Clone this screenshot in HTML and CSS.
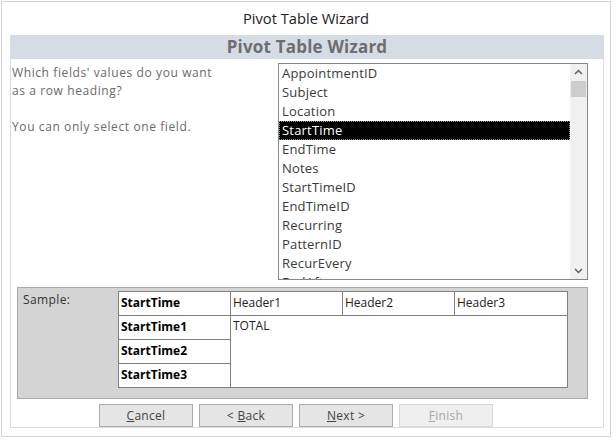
FILE: index.html
```html
<!DOCTYPE html>
<html lang="en">
<head>
  <meta charset="UTF-8" />
  <title>Pivot Table Wizard</title>
  <link rel="stylesheet" href="styles.css">
</head>
<body>
  <div class="window">
    <div class="titlebar">Pivot Table Wizard</div>

    <div class="panel">
      <div class="band">Pivot Table Wizard</div>

      <div class="step">
        <div class="prompt">
          <p>Which fields' values do you want<br>as a row heading?</p>
          <p>You can only select one field.</p>
        </div>

        <div class="listbox">
          <ul class="items">
            <li>AppointmentID</li>
            <li>Subject</li>
            <li>Location</li>
            <li class="selected">StartTime</li>
            <li>EndTime</li>
            <li>Notes</li>
            <li>StartTimeID</li>
            <li>EndTimeID</li>
            <li>Recurring</li>
            <li>PatternID</li>
            <li>RecurEvery</li>
            <li>EndAfter</li>
            <li>EndBy</li>
          </ul>
          <div class="scrollbar">
            <svg class="arrow" width="17" height="17" viewBox="0 0 17 17">
              <path d="M5 10 L8.5 6.5 L12 10" fill="none" stroke="#606060" stroke-width="1.5"/>
            </svg>
            <div class="thumb"></div>
            <div class="track"></div>
            <svg class="arrow" width="17" height="17" viewBox="0 0 17 17">
              <path d="M5 7 L8.5 10.5 L12 7" fill="none" stroke="#606060" stroke-width="1.5"/>
            </svg>
          </div>
        </div>
      </div>

      <div class="sample">
        <span class="sample-label">Sample:</span>
        <div class="grid">
          <div class="cell head">StartTime</div>
          <div class="cell">Header1</div>
          <div class="cell">Header2</div>
          <div class="cell">Header3</div>
          <div class="cell head">StartTime1</div>
          <div class="cell total">TOTAL</div>
          <div class="cell head">StartTime2</div>
          <div class="cell head">StartTime3</div>
        </div>
      </div>

      <div class="buttons">
        <button><u>C</u>ancel</button>
        <button>&lt; <u>B</u>ack</button>
        <button><u>N</u>ext &gt;</button>
        <button class="disabled"><u>F</u>inish</button>
      </div>
    </div>
  </div>
</body>
</html>
```

FILE: styles.css
```css
* {
  box-sizing: border-box;
}

html, body {
  margin: 0;
  padding: 0;
  background: #fff;
  font-family: 'Open Sans', 'DejaVu Sans', sans-serif;
  font-size: 12px;
  color: #333;
}

.window {
  margin: 1px 0 0 1px;
  width: 610px;
  height: 436px;
  border: 1px solid #d4d4d4;
  display: flex;
  flex-direction: column;
}

.titlebar {
  height: 33px;
  line-height: 33px;
  text-align: center;
  font-size: 14.7px;
  color: #222;
}

.panel {
  margin: 0 6px 0 8px;
  height: 393px;
  border: 1px solid #dcdcdc;
  border-top: none;
  display: flex;
  flex-direction: column;
}

.band {
  height: 24px;
  line-height: 24px;
  background: #d6dce5;
  text-align: center;
  font-size: 17px;
  font-weight: 700;
  letter-spacing: 0.2px;
  color: #6e6e6e;
}

.step {
  display: flex;
  margin-top: 4px;
}

.prompt {
  padding: 1px 0 0 1px;
  color: #6a6a6a;
  line-height: 18px;
  letter-spacing: 0.6px;
}

.prompt p {
  margin: 0 0 18px 0;
}

.listbox {
  margin: 0 15px 0 auto;
  width: 310px;
  height: 217px;
  border: 1px solid #828790;
  display: flex;
}

.items {
  flex: 1;
  margin: 0;
  padding: 0;
  list-style: none;
  overflow: hidden;
  font-size: 13px;
  letter-spacing: 0.2px;
  color: #3a3a3a;
}

.items li {
  height: 19px;
  line-height: 19px;
  padding-left: 3px;
}

.items li.selected {
  background: #000;
  color: #fff;
  outline: 1px dotted #9a9a9a;
  outline-offset: -1px;
}

.scrollbar {
  width: 17px;
  background: #f0f0f0;
  display: flex;
  flex-direction: column;
}

.arrow {
  display: block;
}

.thumb {
  margin: 0 1px;
  height: 16px;
  background: #cdcdcd;
}

.track {
  flex: 1;
}

.sample {
  margin: 7px 15px 0 6px;
  height: 112px;
  border: 1px solid #a8a8a8;
  background: #d4d4d4;
  padding: 3px 0 0 5px;
  display: flex;
  align-items: flex-start;
}

.sample-label {
  width: 95px;
  line-height: 18px;
  letter-spacing: 0.4px;
  color: #333;
}

.grid {
  display: grid;
  grid-template-columns: 111px 111px 111px 112px;
  grid-template-rows: repeat(4, 23px);
  gap: 1px;
  padding: 1px;
  background: #808080;
}

.cell {
  background: #fff;
  padding-left: 2px;
  line-height: 21px;
  color: #222;
}

.cell.head {
  font-weight: 700;
  color: #000;
}

.cell.total {
  grid-column: 2 / 5;
  grid-row: 2 / 5;
  line-height: 18px;
  padding-top: 1px;
}

.buttons {
  display: flex;
  gap: 6px;
  margin-top: 5px;
  padding-left: 88px;
}

.buttons button {
  width: 94px;
  height: 23px;
  padding: 0;
  font-family: inherit;
  font-size: 12px;
  letter-spacing: 0.3px;
  color: #444;
  background: #e5e5e5;
  border: 1px solid #acacac;
  border-radius: 0;
}

.buttons button.disabled {
  color: #a8a8a8;
  background: #efefef;
  border-color: #d9d9d9;
}
```
